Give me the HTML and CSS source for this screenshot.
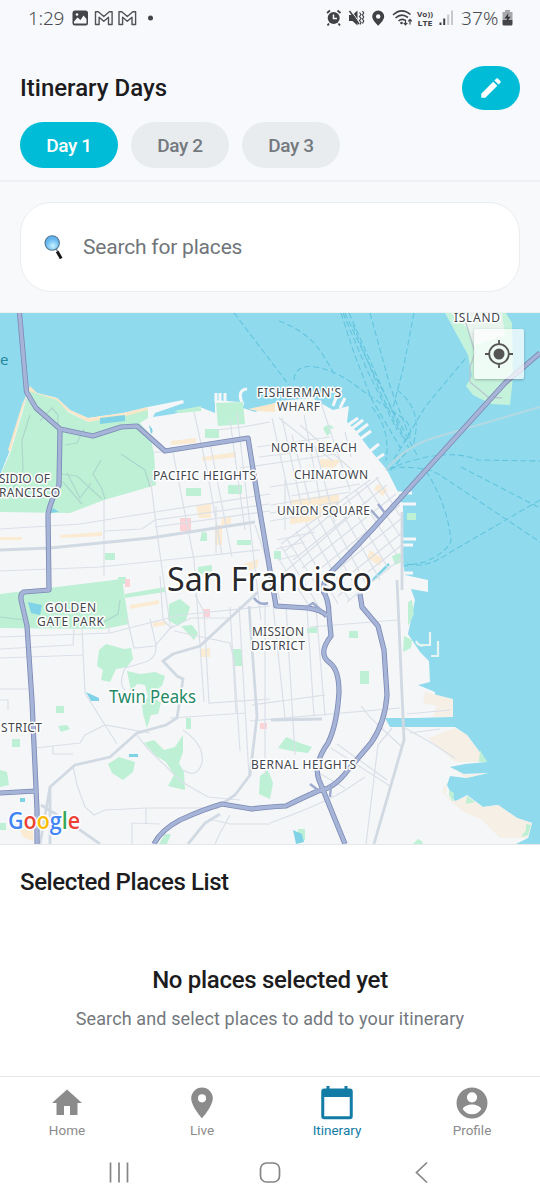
FILE: index.html
```html
<!DOCTYPE html>
<html lang="en">
<head>
<meta charset="utf-8">
<title>Itinerary</title>
<link rel="stylesheet" href="styles.css">
</head>
<body>
<div class="app">
  <div class="status">
    <span class="clock">1:29</span>
    <svg class="st-left" width="84" height="18" viewBox="70 8.500 84 18">
      <rect x="72.500" y="10" width="15.500" height="15" rx="2.500" fill="#434548"/>
      <path d="M74 21l3.500-4 3 2.500 3-4.500 3 3.500v4.500H74z" fill="#f8f9fc"/><circle cx="77" cy="14" r="1.300" fill="#f8f9fc"/>
      <g fill="none" stroke="#505255" stroke-width="1.400" stroke-linejoin="round">
        <path id="gm" d="M95.500 24V11.200h2.800l5.500 4.800 5.500-4.800h2.800V24h-3.600v-7.200l-4.700 4-4.700-4V24z"/>
        <use href="#gm" x="23.500"/>
      </g>
      <circle cx="150.500" cy="17.500" r="2.500" fill="#434548"/>
    </svg>
    <svg class="st-right" width="134" height="18" viewBox="325 8.500 134 18">
      <g fill="#3f4144">
        <circle cx="333.700" cy="17.500" r="6"/>
        <path d="M329 23l-1.500 2M338.500 23l1.500 2M327 12.500l3-2.500M337.500 10l3 2.500" stroke="#3f4144" stroke-width="1.800"/>
        <path d="M333.500 14v4h3.500" stroke="#f8f9fc" stroke-width="1.500" fill="none"/>
        <path d="M349 14.500h3.500l5-4.500v15l-5-4.500H349z"/>
        <path d="M351 10l9 13" stroke="#f8f9fc" stroke-width="1"/><path d="M349.500 10.500l9.500 13" stroke="#3f4144" stroke-width="1.500"/>
        <path d="M359.500 12l1.500 2-1.500 2 1.500 2-1.500 2 1.500 2-1 2M362.500 10.500l1.200 2-1.200 2 1.200 2-1.200 2 1.200 2-1.200 2.500" fill="none" stroke="#3f4144" stroke-width="1.200"/>
        <path d="M378.200 10a6 6 0 0 0-6 6c0 4 6 9.200 6 9.200s6-5.200 6-9.200a6 6 0 0 0-6-6z"/><circle cx="378.200" cy="16" r="2.200" fill="#f8f9fc"/>
        <g fill="none" stroke="#3f4144" stroke-width="1.600"><path d="M393 14.500q8.500-8 17.500-.5M395.500 17.500q6-5.500 12.500-.5M398.500 20.500q3.500-3 6.500-.5"/><path d="M405.500 19v5M403.700 22.300l1.800 2 1.800-2M410 24v-5M408.200 20.800l1.800-2 1.800 2" stroke-width="1.200"/></g>
        <circle cx="401.500" cy="22.500" r="1.300"/>
        <g class="volte"><text x="417" y="16.300" textLength="16" lengthAdjust="spacingAndGlyphs">Vo))</text><text x="417.500" y="25.300" textLength="15" lengthAdjust="spacingAndGlyphs">LTE</text></g>
        <path d="M439.500 22h2v2.500h-2zM443.200 18h2v6.500h-2z"/><path d="M447.200 14h2v10.500h-2zM451 10h2v14.500h-2z" fill="#c6c8cb"/>
      </g>
    </svg>
    <span class="percent">37%</span>
    <svg class="battery" width="11" height="16" viewBox="0 0 11 16"><path d="M3 0h5v2h2.500v8H.5V2H3z" fill="#a6a8ab"/><path d="M.5 10h10v4q0 1.500-1.500 1.500H2Q.5 15.500.5 14z" fill="#434548"/><path d="M6.500 3L2.500 8.500h2.700L4.700 12l3.800-5.200H5.800z" fill="#303236"/></svg>
  </div>

  <header class="header">
    <div class="title-row">
      <h1>Itinerary Days</h1>
      <button class="edit" aria-label="Edit"><svg width="26" height="26" viewBox="0 0 24 24"><path fill="#fff" d="M3 17.250V21h3.750L17.810 9.940l-3.750-3.750L3 17.250zM20.710 7.040a1 1 0 0 0 0-1.410l-2.340-2.340a1 1 0 0 0-1.410 0l-1.830 1.830 3.750 3.750 1.830-1.830z"/></svg></button>
    </div>
    <div class="days"><button class="day active">Day 1</button><button class="day">Day 2</button><button class="day">Day 3</button></div>
  </header>

  <section class="search-area">
    <div class="search">
      <svg width="20" height="28" viewBox="43 233 20 28"><defs><radialGradient id="lens" cx=".55" cy=".7"><stop offset="0" stop-color="#c8f3ff"/><stop offset="1" stop-color="#62b5f0"/></radialGradient></defs><path d="M55.500 248l2.500 4" stroke="#8d9499" stroke-width="1.500"/><path d="M57.200 251.500l4 7" stroke="#16181a" stroke-width="3"/><circle cx="52.200" cy="243" r="7.200" fill="url(#lens)" stroke="#53768d" stroke-width="1.100"/></svg>
      <span>Search for places</span>
    </div>
  </section>

  <main class="map">
  <svg width="540" height="531" viewBox="0 313 540 531">
    <rect y="313" width="540" height="531" fill="#90daee"/>
    <!-- ferry routes -->
    <g fill="none" stroke="#62c5dd" stroke-width="1.100" stroke-dasharray="6 3">
      <path d="M234 313L289 385M279 321Q309 332 323 355T335 376M294 380Q295 364 315 367T355 385T397 414T405 441M341 313L353 350L371 398L404 454M345 313L365 356L391 407L417 455M349 313L379 381L410 451M370 313L390 386L410 438M414 313L404 365L393 408M465 359L425 407L387 471M388 469Q445 446 478 460L540 461M390 468Q424 465 440 475L540 542M461 467L540 508M540 500L449 553Q425 570 405 563M426 471Q448 506 451 541Q447 552 425 562L404 566"/>
      <path d="M343 313L367 370L397 430M353 325L381 394L404 440M397 390Q424 410 413 445L390 471M372 407Q391 430 386 461"/>
    </g>
    <!-- land -->
    <path fill="#f5f6f8" d="M0 475L10 450L18 420L23 407L30 387L37 393L57 398L70 410L88 418L123 413L148 407L183 400L184 403L155 413L153 417L173 414L200 407L215 413V400L240 402L243 408L255 412L270 405L280 401L312 398L333 410L349 406L347 422L356 431L371 451L382 464L387 470L398 492L403 507V563L405 575L428 580V592L411 589L415 600L412 615L408 634L420 652L429 661L430 682L418 685L435 692V699H453V717L415 718L385 718L390 727L455 727L467 735L487 762L465 764L450 767L463 774L488 773L466 778L450 776L447 785L455 802L467 795L483 807L498 805L517 818L532 823L528 838L516 844H0z"/>
    <path fill="#f5efe6" d="M425 692L453 699V717H432L437 706L423 703zM428 738L455 728L467 735L487 762H455L440 749zM447 782L446 795L455 801L467 796L483 807L498 805L517 818L532 823L528 838L500 838L482 820L462 811L452 802L442 792zM452 768L466 775L488 773L466 778z"/>
    <path fill="#fae7c9" d="M30 386L37 393L57 398L70 410L88 418L123 413L148 407V411L125 417L88 422L66 410L28 391L10 452L8 450L22 405zM248 409L275 403V412L258 411z"/>
    <path stroke="#f5f6f8" stroke-width="3" fill="none" d="M333 406l4-11M340 408l5-10M348 425l10-7M350 430l13-10M355 434l13-10M360 439l11-8M369 452l10-8M375 460l9-6M398 493h14M401 504h15M403 539h13M402 545h11M403 573h10M216 403v-10M220 402v-9M225 401v-8M243 405q-7-15 4-16"/>
    <path stroke="#e6f5f1" stroke-width="2.200" fill="none" d="M416 641q3 6 8 4M420 645h10V632M431 656h7V641"/>
    <!-- Yerba Buena island -->
    <path fill="#c5f2da" d="M445 313H506L512 323L513 377L510 405L491 404L473 395L466 386L472 376L468 355z"/><path d="M451 313H502L505 336L474 345L469 330z" fill="#e9f4ee"/>
    <path d="M463 313L475 353L470 367L470 382L488 397L502 398" fill="none" stroke="#b9c9cf" stroke-width="1.300"/>
    <!-- parks -->
    <g fill="#bdf0d4">
      <path d="M29 391L57 400L68 412L88 422L125 416L148 410V418L140 423L150 435L154 453L156 485L104 500L70 513L0 512V476L11 451L24 407z"/>
      <path d="M216 403L243 402L245 424L218 426zM205 429h14v9h-14zM186 488h15v8h-15zM228 485h14v9h-14zM202 531l5 2v8h-7zM237 540h14v5h-14zM105 553h10v7h-10zM198 567l14-2v9h-14zM118 577h8v7h-8zM174 411l27-5v5l-21 2z"/>
      <path d="M0 594L122 579L129 624L104 629L0 628zM125 594L165 587V592L125 598zM169 604L180 599L190 607L186 620L178 626L168 620zM181 626L192 625L198 633L194 640zM99 650L106 644L124 649L131 648L133 659L127 667L116 669L110 682L101 680L103 670L97 666zM127 671L140 674L155 672L165 676L162 686L155 690L152 696L161 703L158 714L151 715L147 728L143 714L142 705L148 697L145 685L137 684L131 691z"/>
      <path d="M108 764L119 757L135 762L133 772L123 780L112 773zM144 743L154 740L164 750L175 747L183 735V752L179 763L184 772L185 790L168 786L174 775L166 762L155 755zM56 706h8v7h-8zM58 726l9-1 3 4-9 3zM12 739h8v8h-8zM0 770L7 772L9 785L0 787zM186 718h5v11h-5zM233 649h9v17h-9zM307 628l10-1v6h-10zM349 631h9v7h-9zM360 671h9v13h-9zM278 748L286 737L300 743L312 747L308 753L292 751zM260 776L268 770L273 783L270 799L259 794zM298 829h7v11l-7 3zM418 839l5 3-1 2h-9zM408 602l4-2 2 14-6 12zM404 636l8 4-1 8-8 4zM407 513h9v7h-9zM392 556l8-3 4 8-9 4zM480 750l7 12h-8zM526 824l5 1-3 10-7 2 5-7zM449 790l5 3-1 9-4-7zM467 796l8 6-9 2zM171 834l-4 10h-8l6-10z"/>
      <path d="M323 428q6-6 11 0l-5 1q4 3-2 7zM274 551h7v8h-7zM0 823h6v7H0z"/>
    </g>
    <g fill="#fbe8c8" opacity=".8">
      <path d="M171 441l25-3v5l-25 2zM202 457l34-5v5l-34 4zM60 535l42-3v4l-42 2zM0 537h22v3H0zM291 500l48-6v16l-31 12-18 2zM320 459l21 1-7 8-14-1zM370 550l13 9-3 7-13-8zM196 506l15-3v15h-12zM222 518l9-1v7l-10 1zM215 525h7v20h-7zM378 484l10 6-5 6-9-7zM243 564l16-5-2 9-13 4zM130 605l29-5v4l-29 5zM153 622l13-1v4l-13 2zM200 649l10-1v9h-10zM20 830l13-3v14l-10-4z"/>
    </g>
    <path d="M180 518h11v13h-11zM203 609h7v8h-7zM125 579h5v8h-5zM260 723h7v6h-7z" fill="#fbd3d6"/>
    <path d="M100 418l25-3v6l-25 3zM149 425q6 6 2 9zM86 692l13 6v3h-8zM129 754h9v3h-9zM20 798h5v4h-5zM293 830l9 4 2 8-8 2zM53 508l6 4-9 1zM388 563l-28 28 4-1 26-25zM28 602l14 3-2 10-9-2z" fill="#80d3e6"/>
    <!-- minor streets -->
    <g fill="none" stroke="#dae0e8" stroke-width="1.200">
      <path d="M0 529L80 524L155 512L270 494M155 520L270 504M155 527L270 511M0 571L100 567L175 559L260 550M104 531L142 529L155 520M104 500V576M150 475L158 540L170 625M172 447L194 560L204 702M194 412L208 475L222 555M210 443L232 557M230 420L245 530M237 413L261 620M216 506V553M217 430L243 427L270 422M154 452H165M240 468L290 461L335 454M285 480V530M255 525L280 600M291 496L360 484M271 505L350 492M270 513L339 502M270 521L332 511M277 540L315 532M276 549L305 542M278 560L297 555"/>
      <path d="M272 418L294 518M282 418L302 508M292 435L310 503M304 415L320 499M315 446L335 522M345 432L351 457M279 418L333 461M300 425L358 475M320 400L350 490M270 487L350 475M257 447L330 437M259 457L343 447"/>
      <path d="M285 551L379 477M293 560L387 485M302 568L396 494M311 576L400 505M319 584L402 518M329 591L403 532M338 596L403 544M347 602L403 557M281 544L370 480M280 576L370 499"/>
      <path d="M376 477L400 516M366 484L400 536M356 490L397 555M346 496L389 570M336 502L380 580M326 508L369 590M316 515L360 595M306 523L349 600M296 531L338 604M287 539L330 606M281 546L318 605M278 558L308 604"/>
      <path d="M0 637L110 633L180 615L270 606M0 649L72 645M0 658L83 655M0 689H28M0 700H8V710M35 748L80 743L85 735L105 725L150 733M82 628L85 693L105 725L117 744M53 746V754H73M109 625V634M74 629L73 646M150 619L156 645Q157 660 142 663L125 668Q118 684 125 690M127 618L134 648L155 646L173 625M160 576L163 620L171 628L191 618H230M195 595L204 612L209 703L270 699M170 718L246 713M137 735L147 748L182 782L208 797L240 800M183 730Q205 745 202 763Q197 779 183 770M73 766L77 785L85 807L94 815L105 810L147 808H218M146 808V823M132 844V823L160 824M209 819L230 824H270M174 631L230 643L234 660L240 751M230 607L236 713M239 606L249 775M265 605V775M273 605L285 718M286 606L295 755M307 608L314 716M316 608L325 716M252 705L325 695M250 721L400 708M310 627L397 620M361 706Q369 717 378 725L402 747M366 844L378 745L392 728M331 748L390 786M337 744L387 780M310 768L345 788M270 823Q320 805 344 791L365 777M215 844L219 835L230 815"/>
      <path d="M407 714L450 710M403 727L430 742L455 758M410 733L440 729"/>
    </g>
    <path fill="none" stroke="#aed6cc" stroke-width="1.200" d="M40 421L52 408L58 415V433M30 415L22 440L23 470L8 498M65 445L77 443L84 429M101 460L93 474L102 489L105 499M121 454L145 470L150 487M60 474L77 476L102 499M63 482L82 504M67 473L80 498L91 483M0 617L25 620M104 622L118 614L120 600"/>
    <!-- arterials -->
    <g fill="none" stroke="#d1d9e2" stroke-width="2.800">
      <path d="M0 550L50 548L150 538L255 522M40 844L50 787L75 765L110 757L137 733L166 725L177 718L183 679L177 676L163 661L173 654L200 646L258 592M50 787V844M397 580L404 740L374 844M249 606L257 716L250 775L235 795L216 808M41 805L70 823L100 844M188 844L205 823L220 814M271 720L322 719M402 512V590" />
    </g>
    <path d="M386 470Q407 444 440 436L540 407" stroke="#b5d9e2" stroke-width="2" fill="none"/>
    <!-- freeways -->
    <g fill="none" stroke-linejoin="round">
      <defs><path id="fw" d="M19.500 313L26.500 392L36 408L60 429L93 436L121 427L137 426L165 451L248 438L258 500L276 606L308 608Q322 610 327 616M60 430L59 485Q49 505 48 515L49 590L24 592Q19 594 22 604L27 626L32 701L37 810V844M0 793L36 791M540 353L505 383L387 513Q360 544 327 576L322 589Q329 599 329 615L331 636Q317 654 330 663Q339 670 339 692Q337 725 328 743Q313 764 319 780L345 844M360 594L362 607L378 626L384 650L387 695Q385 723 371 743L348 770Q334 789 318 791Q300 799 286 806Q265 807 252 809L222 804Q204 809 180 820Q161 830 154 844"/></defs>
      <use href="#fw" stroke="#7c89b6" stroke-width="5.200"/>
      <use href="#fw" stroke="#a6b4d7" stroke-width="3.600"/>
      <path d="M371 510l8 9M378 504l7 9M331 785l-1 12M305 608l8-5 8 7M254 598q6 8 14 5M310 784l8 6" stroke="#9dabcf" stroke-width="2.500"/>
    </g>
    <!-- place labels -->
    <g class="labels">
      <text x="454" y="322" textLength="46">ISLAND</text>
      <text x="257" y="397" textLength="84">FISHERMAN'S</text><text x="277" y="411" textLength="43">WHARF</text>
      <text x="271" y="452" textLength="86">NORTH BEACH</text><text x="294" y="479" textLength="74">CHINATOWN</text>
      <text x="277" y="515" textLength="93">UNION SQUARE</text><text x="153" y="479.500" textLength="103">PACIFIC HEIGHTS</text>
      <text x="-1" y="483" textLength="51">SIDIO OF</text><text x="-1" y="497" textLength="61">RANCISCO</text>
      <text x="45" y="612" textLength="51">GOLDEN</text><text x="37" y="626" textLength="67">GATE PARK</text>
      <text x="252" y="636" textLength="52">MISSION</text><text x="251" y="649.500" textLength="54">DISTRICT</text>
      <text x="1" y="732" textLength="41">STRICT</text><text x="251" y="768.500" textLength="105">BERNAL HEIGHTS</text>
      <text class="peaks" x="109" y="703" textLength="87" lengthAdjust="spacingAndGlyphs">Twin Peaks</text>
      <text class="water" x="0" y="365">e</text>
      <text class="city" x="167" y="591" textLength="205" lengthAdjust="spacingAndGlyphs">San Francisco</text>
      <text class="google" x="8" y="829" textLength="72" lengthAdjust="spacingAndGlyphs"><tspan fill="#4285f4">G</tspan><tspan fill="#ea4335">o</tspan><tspan fill="#fbbc04">o</tspan><tspan fill="#4285f4">g</tspan><tspan fill="#34a853">l</tspan><tspan fill="#ea4335">e</tspan></text>
    </g>
  </svg>
  <button class="locate" aria-label="My location"><svg width="30" height="30" viewBox="0 0 30 30"><circle cx="15" cy="15" r="5.500" fill="#555"/><circle cx="15" cy="15" r="9.800" fill="none" stroke="#555" stroke-width="1.800"/><path d="M15 1v5M15 24v5M1 15h5M24 15h5" stroke="#555" stroke-width="1.800"/></svg></button>
  </main>

  <section class="selected">
    <h2>Selected Places List</h2>
    <h3>No places selected yet</h3>
    <p>Search and select places to add to your itinerary</p>
  </section>

  <nav class="tabs">
    <a class="tab"><svg width="36" height="36" viewBox="0 0 24 24"><path d="M10 20v-6h4v6h5v-8h3L12 3 2 12h3v8z"/></svg><span>Home</span></a>
    <a class="tab"><svg width="36" height="36" viewBox="0 0 24 24"><path d="M12 1.700A7.200 7.200 0 0 0 4.800 8.900C4.800 14.300 12 22.300 12 22.300s7.200-8 7.200-13.400A7.200 7.200 0 0 0 12 1.700zm0 9.900a2.700 2.700 0 1 1 0-5.400 2.700 2.700 0 0 1 0 5.400z"/></svg><span>Live</span></a>
    <a class="tab on"><svg width="36" height="36" viewBox="0 0 24 24"><path d="M20.500 2.400H19V.6h-2v1.800H7V.6H5v1.800H3.500a2 2 0 0 0-2 2v16.500a2 2 0 0 0 2 2h17a2 2 0 0 0 2-2V4.400a2 2 0 0 0-2-2zm0 18.500h-17V8h17z"/></svg><span>Itinerary</span></a>
    <a class="tab"><svg width="36" height="36" viewBox="0 0 24 24"><path d="M12 1.700a10.300 10.300 0 1 0 0 20.600 10.300 10.300 0 0 0 0-20.600zm0 3.100a3.400 3.400 0 1 1 0 6.800 3.400 3.400 0 0 1 0-6.800zm0 14.700a7.300 7.300 0 0 1-6.100-3.300c0-2 4.100-3.200 6.100-3.200s6.100 1.200 6.100 3.200a7.300 7.300 0 0 1-6.100 3.300z"/></svg><span>Profile</span></a>
  </nav>
  <div class="system">
    <svg width="540" height="60" viewBox="0 1144 540 60" fill="none" stroke="#858585" stroke-width="1.700"><path d="M110.500 1162.500v20M119 1162.500v20M127.500 1162.500v20M427 1162.500l-10.500 10 10.500 10"/><rect x="260.500" y="1163" width="19" height="19" rx="6"/></svg>
  </div>
</div>
</body>
</html>
```
FILE: styles.css
```css
* { box-sizing: border-box; }
body { margin: 0; background: #fff; font-family: Roboto, "Noto Sans", sans-serif; }
button { border: 0; padding: 0; font: inherit; display: flex; align-items: center; justify-content: center; }
h1, h2, h3, p { margin: 0; }
svg { display: block; flex: none; }
.app { width: 540px; height: 1204px; display: flex; flex-direction: column; overflow: hidden; }

.status { height: 36px; flex: none; display: flex; align-items: center; padding-left: 28px; background: #f8f9fc; color: #4a4c4f; font-family: "Noto Sans", sans-serif; font-size: 19px; font-weight: 300; line-height: 36px; }
.clock { width: 42px; letter-spacing: -0.3px; }
.st-right { margin-left: 171px; }
.volte { font: 700 7.5px "Open Sans", sans-serif; }
.percent { width: 42px; padding-left: 2px; letter-spacing: 0.2px; }
.battery { margin-left: 1px; }

.header { height: 146px; flex: none; background: #f8f9fc; border-bottom: 2px solid #eef0f2; padding: 29px 20px 0; }
.title-row { display: flex; justify-content: space-between; align-items: center; height: 45px; }
h1, h2, h3 { font-size: 24px; font-weight: 500; line-height: 30px; color: #1c1c20; }
h1 { letter-spacing: 0; }
h2 { letter-spacing: -0.4px; }
h3 { letter-spacing: -0.3px; }
.edit { width: 58px; height: 44px; border-radius: 22px; background: #00bcd7; }
.days { display: flex; gap: 13px; margin-top: 12px; }
.day { width: 98px; height: 46px; border-radius: 23px; background: #e9ecef; color: #74797e; font-size: 19px; font-weight: 500; letter-spacing: -0.4px; }
.day.active { background: #00bcd7; color: #fff; }

.search-area { height: 131px; flex: none; background: #f8f9fb; padding: 20px 20px 0; border-bottom: 1px solid #eef1f2; }
.search { height: 90px; border: 1.5px solid #e9edef; border-radius: 31px; background: #fff; display: flex; align-items: center; gap: 20px; padding-left: 22px; color: #70757a; font-size: 21px; letter-spacing: -0.2px; }

.map { height: 531px; flex: none; position: relative; }
.locate { position: absolute; top: 16px; right: 16px; width: 50px; height: 50px; background: rgba(255, 255, 255, .72); box-shadow: 0 1px 3px rgba(0, 0, 0, .25); border-radius: 2px; }
.labels { font: 400 12px "Noto Sans", sans-serif; fill: #43474d; stroke: #fff; stroke-width: 3px; stroke-linejoin: round; paint-order: stroke; }
.labels .peaks { font-size: 17.5px; fill: #248866; }
.labels .water { font-size: 15px; fill: #2488a0; stroke: none; }
.labels .city { font-size: 33px; fill: #27292c; stroke-width: 4px; }
.labels .google { font: 600 23px "Open Sans", sans-serif; }

.selected { height: 232px; flex: none; border-top: 1px solid #e4e8ea; padding: 22px 20px 0; background: #fff; }
h3 { margin-top: 68px; text-align: center; }
.selected p { margin-top: 12px; text-align: center; color: #73787d; font-size: 18px; line-height: 24px; letter-spacing: 0.12px; }

.tabs { height: 68px; flex: none; border-top: 1.5px solid #e6e6e6; display: flex; background: #fff; }
.tab { flex: 1; display: flex; flex-direction: column; align-items: center; padding: 8px 1px 0 0; color: #8b8b8b; font-size: 13.5px; line-height: 18px; letter-spacing: 0; }
.tab svg { fill: currentColor; }
.tab.on { color: #137ca6; }
.system { height: 60px; flex: none; background: #fff; }
```
